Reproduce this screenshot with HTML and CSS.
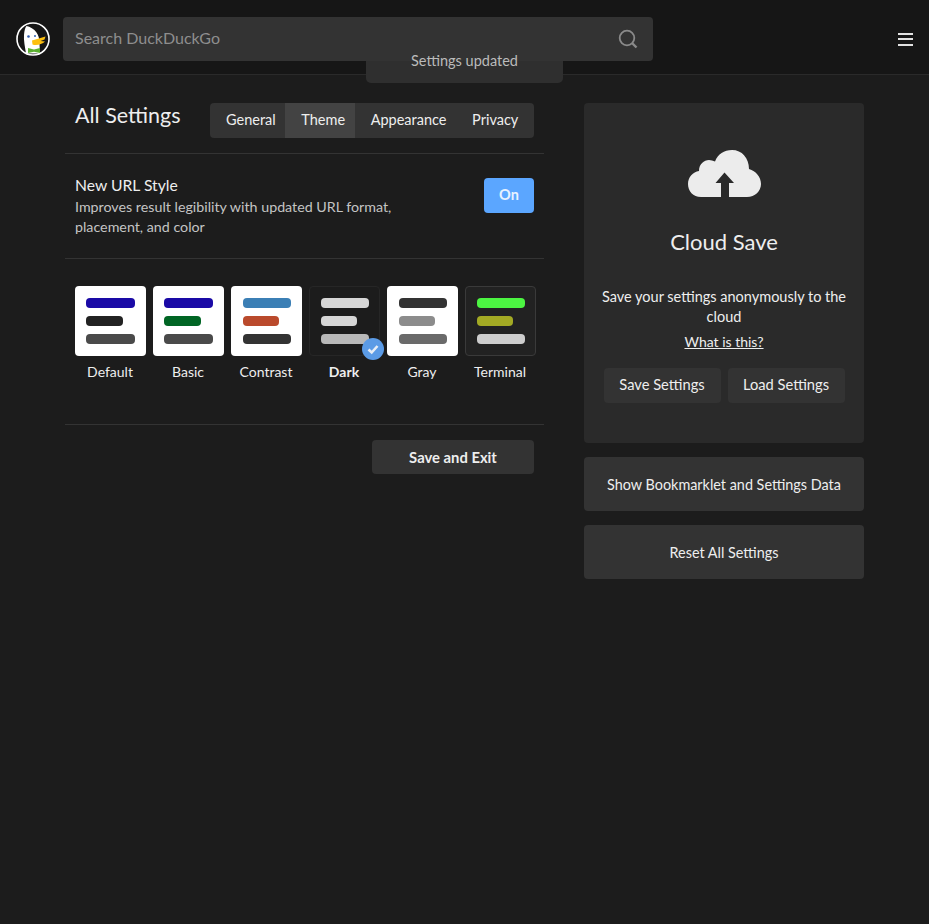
FILE: index.html
```html
<!DOCTYPE html>
<html lang="en">
<head>
  <meta charset="UTF-8" />
  <title>DuckDuckGo Settings</title>
  <link rel="stylesheet" href="styles.css">
</head>
<body>
  <header class="header">
    <svg class="logo" width="34" height="34" viewBox="0 0 34 34">
      <circle cx="17" cy="17" r="16" fill="#161616" stroke="#fff" stroke-width="1.6"/>
      <path d="M10 31.500 C9 25 7.500 18 8 13 C8.400 8.500 9 6 10.500 4 C14 4.500 18 7 20.500 10.500 C22.500 13 23.500 17 23.500 22 L24 31.500 Z" fill="#fff"/>
      <circle cx="12.500" cy="14.500" r="1.300" fill="#2d5bb0"/>
      <circle cx="19" cy="14" r="1" fill="#2d5bb0"/>
      <path d="M16 18.500 L29.500 14.500 L28.500 17.500 L24.500 19 L29 19.500 C26 22.500 20 24 16.500 22.500 Z" fill="#fdc010"/>
      <path d="M12 26 L18 27.500 L24 26 L24 31 L18 29.800 L12 31 Z" fill="#5bb030"/>
    </svg>
    <div class="search">
      <span class="search-text">Search DuckDuckGo</span>
      <svg class="search-icon" width="20" height="20" viewBox="0 0 20 20" fill="none" stroke="#8a8a8a">
        <circle cx="9" cy="9" r="7.300" stroke-width="1.800"/>
        <path d="M14 14 L18.500 18.500" stroke-width="2.400"/>
      </svg>
    </div>
    <div class="menu"><span></span><span></span><span></span></div>
  </header>

  <div class="toast">Settings updated</div>

  <main class="content">
    <section class="settings">
      <div class="title-row">
        <h1 class="title">All Settings</h1>
        <nav class="tabs">
          <a class="tab">General</a>
          <a class="tab active">Theme</a>
          <a class="tab">Appearance</a>
          <a class="tab">Privacy</a>
        </nav>
      </div>

      <div class="url-row">
        <div>
          <div class="url-title">New URL Style</div>
          <div class="url-desc">Improves result legibility with updated URL format, placement, and color</div>
        </div>
        <div class="toggle">On</div>
      </div>

      <div class="themes">
        <div class="theme">
          <div class="swatch">
            <i class="bar" style="background:#1a0aa6"></i>
            <i class="bar short" style="background:#222"></i>
            <i class="bar" style="background:#4a4a4a"></i>
          </div>
          <span>Default</span>
        </div>
        <div class="theme">
          <div class="swatch">
            <i class="bar" style="background:#1a0aa6"></i>
            <i class="bar short" style="background:#006524"></i>
            <i class="bar" style="background:#4a4a4a"></i>
          </div>
          <span>Basic</span>
        </div>
        <div class="theme">
          <div class="swatch inset">
            <i class="bar" style="background:#3b7fb5"></i>
            <i class="bar short" style="background:#ba4a2c"></i>
            <i class="bar" style="background:#333"></i>
          </div>
          <span>Contrast</span>
        </div>
        <div class="theme selected">
          <div class="swatch inset dark">
            <i class="bar" style="background:#d6d6d6"></i>
            <i class="bar short" style="background:#d6d6d6"></i>
            <i class="bar" style="background:#b8b8b8"></i>
            <svg class="check" width="22" height="22" viewBox="0 0 22 22">
              <circle cx="11" cy="11" r="11" fill="#5b9be6"/>
              <path d="M6.500 11.500 L9.700 14.500 L15.500 8" fill="none" stroke="#e8eef6" stroke-width="2.600"/>
            </svg>
          </div>
          <span>Dark</span>
        </div>
        <div class="theme">
          <div class="swatch inset">
            <i class="bar" style="background:#333"></i>
            <i class="bar short" style="background:#8c8c8c"></i>
            <i class="bar" style="background:#6a6a6a"></i>
          </div>
          <span>Gray</span>
        </div>
        <div class="theme">
          <div class="swatch inset terminal">
            <i class="bar" style="background:#4cf542"></i>
            <i class="bar short" style="background:#a3aa24"></i>
            <i class="bar" style="background:#cdcdcd"></i>
          </div>
          <span>Terminal</span>
        </div>
      </div>

      <div class="save-row">
        <button class="save-btn">Save and Exit</button>
      </div>
    </section>

    <aside class="side">
      <div class="cloud">
        <svg class="cloud-icon" width="73" height="47" viewBox="0 0 73 47">
          <path fill="#ececec" d="M13 47 C5 47 0 41 0 34 C0 27 5 22 11 21 C11 14 16 10 21 10 C23 10 25 10.500 27 11.500 C30 4 36 0 44 0 C54 0 61 8 61 19 C68 21 73 27 73 34 C73 41 67 47 59 47 Z"/>
          <path fill="#2a2a2a" d="M36.500 22.500 L27.500 33 L33 33 L33 47 L41 47 L41 33 L46 33 Z"/>
        </svg>
        <h2 class="cloud-title">Cloud Save</h2>
        <p class="cloud-text">Save your settings anonymously to the cloud</p>
        <a class="cloud-link">What is this?</a>
        <div class="cloud-btns">
          <button class="btn">Save Settings</button>
          <button class="btn">Load Settings</button>
        </div>
      </div>
      <button class="side-btn">Show Bookmarklet and Settings Data</button>
      <button class="side-btn">Reset All Settings</button>
    </aside>
  </main>
</body>
</html>
```

FILE: styles.css
```css
body {
  margin: 0;
  min-height: 924px;
  background: #1c1c1c;
  color: #eee;
  font-family: "Lato", "Liberation Sans", sans-serif;
  font-size: 14.500px;
}
.header {
  display: flex;
  align-items: center;
  height: 75px;
  padding: 4px 16px 0;
  box-sizing: border-box;
  background: #161616;
  border-bottom: 1px solid #2a2a2a;
}
.logo {
  flex: none;
  margin-right: 13px;
}
.search {
  position: relative;
  z-index: 2;
  display: flex;
  align-items: center;
  justify-content: space-between;
  width: 590px;
  height: 44px;
  padding: 0 15px 0 12px;
  box-sizing: border-box;
  background: #333;
  border-radius: 4px;
}
.search-text {
  margin-bottom: 3px;
  color: #8e8e8e;
  font-size: 16px;
}
.menu {
  margin-left: auto;
  display: flex;
  flex-direction: column;
  gap: 3.500px;
}
.menu span {
  display: block;
  width: 15px;
  height: 2px;
  background: #e2e2e2;
}
.toast {
  position: absolute;
  z-index: 3;
  left: 366px;
  top: 40px;
  width: 197px;
  height: 43px;
  padding-top: 12px;
  box-sizing: border-box;
  background: linear-gradient(#333 50%, #2f2f2f 50%);
  border-radius: 0 0 5px 5px;
  color: #bbb;
  text-align: center;
}
.content {
  display: flex;
  gap: 40px;
  padding: 28px 0 0 65px;
}
.settings {
  width: 479px;
}
.title-row {
  display: flex;
  justify-content: space-between;
  align-items: flex-start;
  padding: 0 10px 15px;
  border-bottom: 1px solid #333;
}
.title {
  margin: 0;
  font-size: 21.500px;
  font-weight: 400;
  line-height: 24px;
}
.tabs {
  display: flex;
  width: 324px;
  height: 35px;
  background: #333;
  border-radius: 4px;
  overflow: hidden;
}
.tab {
  padding: 0 9.600px 0 16px;
  line-height: 33px;
}
.tab:last-child {
  flex: 1;
}
.tab.active {
  background: #434343;
}
.url-row {
  display: flex;
  justify-content: space-between;
  align-items: flex-start;
  padding: 21px 10px;
  border-bottom: 1px solid #333;
}
.url-title {
  font-size: 15.700px;
  line-height: 20px;
}
.url-desc {
  width: 340px;
  margin-top: 2px;
  color: #c4c4c4;
  font-size: 14.250px;
  line-height: 20px;
}
.toggle {
  width: 50px;
  height: 35px;
  margin-top: 3px;
  background: #5ba6ff;
  border-radius: 4px;
  color: #e8f2ff;
  text-align: center;
  font-weight: 700;
  line-height: 34px;
}
.themes {
  display: flex;
  gap: 7px;
  padding: 27px 10px 43px;
  border-bottom: 1px solid #333;
}
.theme {
  width: 71px;
  text-align: center;
}
.theme span {
  display: block;
  margin-top: 7px;
  padding-right: 1px;
  font-size: 14px;
  line-height: 18px;
}
.theme.selected span {
  font-weight: 700;
}
.swatch {
  position: relative;
  display: flex;
  flex-direction: column;
  gap: 8px;
  height: 70px;
  padding: 12px 11px;
  box-sizing: border-box;
  background: #fff;
  border-radius: 4px;
}
.swatch.inset {
  padding: 12px;
}
.swatch.inset .bar {
  width: 48px;
}
.swatch.inset .bar.short {
  width: 36px;
}
.swatch.dark {
  background: #1c1c1c;
  border: 1px solid #262626;
  padding: 11px;
}
.swatch.terminal {
  background: #222;
  border: 1px solid #3a3a3a;
  padding: 11px;
}
.bar {
  display: block;
  width: 49px;
  height: 10px;
  border-radius: 4px;
}
.bar.short {
  width: 37px;
}
.check {
  position: absolute;
  right: -5px;
  bottom: -5px;
}
.save-row {
  display: flex;
  justify-content: flex-end;
  padding: 15px 10px 0;
}
button {
  border: 0;
  background: #333;
  color: #eee;
  font-family: inherit;
  font-size: 14.400px;
  border-radius: 4px;
}
.save-btn {
  width: 162px;
  height: 34px;
  font-size: 14.800px;
  font-weight: 700;
}
.side {
  display: flex;
  flex-direction: column;
  gap: 14px;
  width: 280px;
}
.cloud {
  height: 340px;
  padding-top: 47px;
  box-sizing: border-box;
  background: #2a2a2a;
  border-radius: 4px;
  text-align: center;
}
.cloud-icon {
  display: block;
  margin-left: 104px;
}
.cloud-title {
  margin: 32px 0 0;
  font-size: 22px;
  font-weight: 400;
  line-height: 26px;
}
.cloud-text {
  margin: 32px 10px 0;
  line-height: 20px;
}
.cloud-link {
  display: block;
  margin-top: 5px;
  font-size: 14px;
  line-height: 20px;
  text-decoration: underline;
}
.cloud-btns {
  display: flex;
  justify-content: center;
  gap: 7px;
  margin-top: 16px;
}
.btn {
  width: 117px;
  height: 35px;
  padding-bottom: 4px;
  font-size: 14.700px;
}
.side-btn {
  height: 54px;
}
```
